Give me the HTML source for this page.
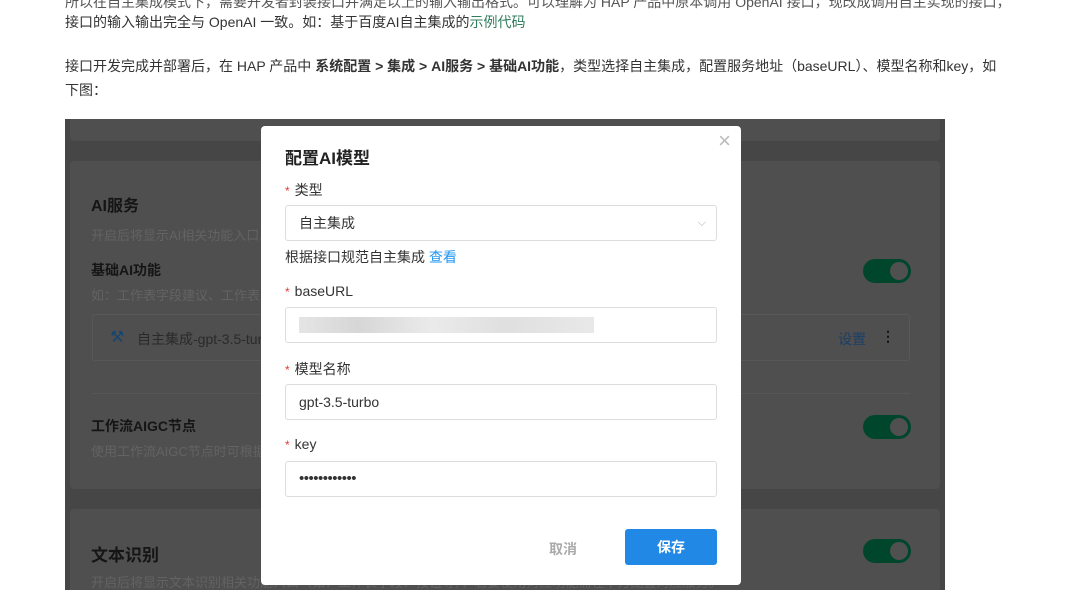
<!DOCTYPE html>
<html><head><meta charset="utf-8"><style>
*{margin:0;padding:0;box-sizing:border-box}
body{width:1079px;height:616px;background:#fff;position:relative;overflow:hidden;font-family:"Liberation Sans","Noto Sans CJK SC",sans-serif;color:#333;font-size:14px}
.t{position:absolute;left:65px;white-space:nowrap;font-size:14px;color:#333}
.shot{position:absolute;left:65px;top:119px;width:880px;height:471px;background:#464646;overflow:hidden}
.card{position:absolute;left:5px;width:870px;background:#4f4f4f;border-radius:4px}
.a{position:absolute;white-space:nowrap}
.tg{position:absolute;width:48px;height:24px;border-radius:12px;background:#00462c}
.tg::after{content:"";position:absolute;right:3px;top:3px;width:18px;height:18px;border-radius:50%;background:#505050}
.modal{position:absolute;left:261px;top:126px;width:480px;height:459px;background:#fff;border-radius:4px}
.lab{position:absolute;left:24px;font-size:14px;color:#333}
.lab b{color:#e53935;font-weight:normal;margin-right:5px;font-size:12px}
.in{position:absolute;left:24px;width:432px;height:36px;border:1px solid #ddd;border-radius:3px;padding-left:13px;line-height:34px;font-size:14px;color:#333}
</style></head><body>
<div class="t" style="top:-8px;color:#555">所以在自主集成模式下，需要开发者封装接口并满足以上的输入输出格式。可以理解为 HAP 产品中原本调用 OpenAI 接口，现改成调用自主实现的接口，</div>
<div class="t" style="top:12px">接口的输入输出完全与 OpenAI 一致。如：基于百度AI自主集成的<span style="color:#2e7d5b">示例代码</span></div>
<div class="t" style="top:56px">接口开发完成并部署后，在 HAP 产品中 <b>系统配置 &gt; 集成 &gt; AI服务 &gt; 基础AI功能</b>，类型选择自主集成，配置服务地址（baseURL）、模型名称和key，如</div>
<div class="t" style="top:80px">下图：</div>

<div class="shot">
 <div class="card" style="top:-10px;height:32px"></div>
 <div class="card" style="top:42px;height:328px">
  <div class="a" style="left:21px;top:31px;font-size:16px;font-weight:bold;color:#151515">AI服务</div>
  <div class="a" style="left:21px;top:64px;font-size:13px;color:#636363">开启后将显示AI相关功能入口...</div>
  <div class="a" style="left:21px;top:99px;font-size:14px;font-weight:bold;color:#151515">基础AI功能</div>
  <div class="a" style="left:21px;top:124px;font-size:13px;color:#636363">如：工作表字段建议、工作表...</div>
  <div class="tg" style="left:793px;top:98px"></div>
  <div style="position:absolute;left:22px;top:153px;width:818px;height:47px;border:1px solid #585858;border-radius:3px">
   <div class="a" style="left:17px;top:12px;font-size:16px;color:#17456e">⚒</div>
   <div class="a" style="left:44px;top:14px;font-size:14px;color:#2a2a2a">自主集成-gpt-3.5-turbo</div>
   <div class="a" style="left:745px;top:14px;font-size:14px;color:#1c3f66">设置</div>
   <div class="a" style="left:788px;top:13px;font-size:14px;font-weight:bold;color:#111">⋮</div>
  </div>
  <div style="position:absolute;left:22px;top:232px;width:818px;height:1px;background:#575757"></div>
  <div class="a" style="left:21px;top:255px;font-size:14px;font-weight:bold;color:#151515">工作流AIGC节点</div>
  <div class="a" style="left:21px;top:280px;font-size:13px;color:#636363">使用工作流AIGC节点时可根据...</div>
  <div class="tg" style="left:793px;top:254px"></div>
 </div>
 <div class="card" style="top:390px;height:100px">
  <div class="a" style="left:21px;top:32px;font-size:17px;font-weight:bold;color:#151515">文本识别</div>
  <div class="a" style="left:21px;top:63px;font-size:13px;color:#636363">开启后将显示文本识别相关功能入口（如：工作表字段、按钮等），若要使用对应功能需在下方配置对应服务。</div>
  <div class="tg" style="left:793px;top:30px"></div>
 </div>
</div>

<div class="modal">
 <div class="a" style="right:10px;top:2px;font-size:22px;color:#bbb">×</div>
 <div class="a" style="left:24px;top:18px;font-size:17px;font-weight:bold;color:#222">配置AI模型</div>
 <div class="lab" style="top:54px"><b>*</b>类型</div>
 <div class="in" style="top:79px">自主集成<span style="position:absolute;right:10px;top:0;color:#aaa;font-size:11px">⌵</span></div>
 <div class="lab" style="top:121px">根据接口规范自主集成 <span style="color:#2196f3">查看</span></div>
 <div class="lab" style="top:157px"><b>*</b>baseURL</div>
 <div class="in" style="top:181px"><div style="position:absolute;left:13px;top:9px;width:295px;height:16px;background:linear-gradient(90deg,#e2e2e2,#d2d2d2 20%,#e8e8e8 45%,#dcdcdc 70%,#e6e6e6);opacity:.9"></div></div>
 <div class="lab" style="top:233px"><b>*</b>模型名称</div>
 <div class="in" style="top:258px">gpt-3.5-turbo</div>
 <div class="lab" style="top:310px"><b>*</b>key</div>
 <div class="in" style="top:335px;font-size:15px;letter-spacing:-0.5px">••••••••••••</div>
 <div class="a" style="left:288px;top:413px;font-size:14px;font-weight:bold;color:#aaa">取消</div>
 <div style="position:absolute;left:364px;top:403px;width:92px;height:36px;background:#2189e5;border-radius:3px;color:#fff;font-weight:bold;text-align:center;line-height:36px">保存</div>
</div>
</body></html>
